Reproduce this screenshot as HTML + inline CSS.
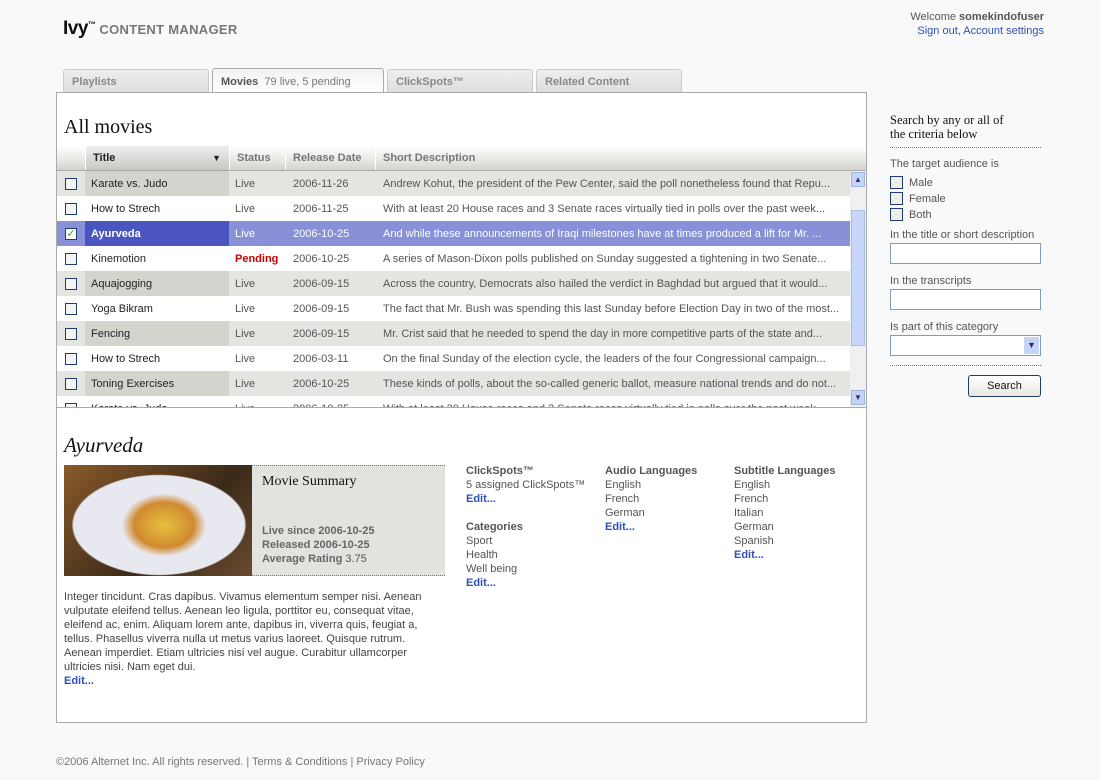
<!DOCTYPE html>
<html><head><meta charset="utf-8">
<style>
*{margin:0;padding:0;box-sizing:border-box}
body{width:1100px;height:780px;background:#f9f9f9;font-family:"Liberation Sans",Tahoma,sans-serif;font-size:11px;color:#555;position:relative;overflow:hidden}
.abs{position:absolute}
.logo{left:63px;top:18px;font-size:19px;font-weight:bold;color:#111;letter-spacing:-0.5px}
.logo sup{font-size:8px;vertical-align:7px}
.logo span{font-size:13px;color:#777;letter-spacing:0.3px;margin-left:4px}
.welcome{right:56px;top:10px;text-align:right;line-height:14px;color:#555}
.welcome a{color:#2f4fb8;text-decoration:none}
.tab{top:69px;height:24px;background:linear-gradient(#eee,#ddd);border:1px solid #ccc;border-bottom:none;border-radius:3px 3px 0 0;font-weight:bold;color:#888;padding:6px 8px}
.tab.on{background:linear-gradient(#f2f2f2,#fff);border-color:#aaa;color:#555;height:25px;top:68px;padding-top:7px}
.tab.on span{font-weight:normal;color:#777}
.panel{left:56px;top:92px;width:811px;height:631px;border:1px solid #aaa;background:#fff}
h1{font-family:"Liberation Serif",serif;font-weight:normal;font-size:20px;color:#111;position:absolute;left:7px;top:23px}
.hdr{position:absolute;left:0;top:53px;width:809px;height:25px;background:linear-gradient(#fff,#e6e6e3 60%,#d2d2ce);border-bottom:1px solid #aaa}
.hdr div{position:absolute;top:0;height:24px;line-height:25px;font-weight:bold;color:#777;padding-left:7px;border-left:1px solid #fff}
.rows{position:absolute;left:0;top:78px;width:793px;height:236px;overflow:hidden}
.row{height:25px;position:relative;line-height:27px;background:#fff}
.row div{position:absolute;top:0;height:25px;white-space:nowrap;overflow:hidden;text-overflow:ellipsis;padding-left:6px}
.row.g{background:#e4e4e0}
.row.g .t{background:#d4d4cf}
.row .t{left:28px;width:144px;color:#222}
.row .s{left:172px;width:56px}
.row .d{left:228px;width:90px;padding-left:8px}
.row .x{left:318px;width:472px;padding-left:8px}
.cb{position:absolute;left:8px;top:7px;width:12px;height:12px;border:1px solid #1c3f6e;background:#f4f4f2}
.row.sel{background:#8890d8;color:#fff}
.row.sel .t{background:#4a55c0;color:#fff;font-weight:bold}
.sb{position:absolute;left:793px;top:78px;width:16px;height:236px;background:#f0f0f0}
.sep{position:absolute;left:0;top:314px;width:809px;border-top:1px solid #aaa}
h2{font-family:"Liberation Serif",serif;font-style:italic;font-weight:normal;font-size:21px;color:#111;position:absolute;left:7px;top:340px}
.img{left:7px;top:372px;width:188px;height:111px;background:radial-gradient(ellipse 60px 45px at 100px 60px,#e8c040,#d08a30 50%,transparent 70%),radial-gradient(ellipse 95px 55px at 95px 60px,#e8e8f0 90%,transparent 92%),linear-gradient(135deg,#8a5a2a,#3a2a18 60%,#6a4a30)}
.sum{left:195px;top:372px;width:193px;height:111px;background:#e2e2de;border-top:1px dotted #777;border-bottom:1px dotted #777;padding:8px 10px}
.sum h3{font-family:"Liberation Serif",serif;font-weight:normal;font-size:14px;color:#111}
.sum p{position:absolute;left:10px;top:58px;line-height:14px}
b{color:#666}
.col{line-height:14px;top:371px}
.col b{color:#555}
.col a,.desc a{color:#2f4fb8;font-weight:bold;text-decoration:none}
.desc{left:7px;top:497px;width:370px;line-height:14px;color:#444}
.side{left:890px;top:113px;width:151px}
.side h4{font-family:"Liberation Serif",serif;font-weight:normal;font-size:12.5px;color:#111;line-height:14px;padding-bottom:6px;border-bottom:1px dotted #777}
.lbl{margin-top:11px}
.ck{position:relative;height:16px;line-height:16px;padding-left:19px}
.ck i{position:absolute;left:0;top:1px;width:13px;height:13px;border:1px solid #1c3f6e;background:#eeeeea}
.inp{width:151px;height:21px;border:1px solid #7f9db9;background:#fff;margin-top:2px}
.btn{position:absolute;right:0;width:73px;height:22px;border:1px solid #1c3f6e;border-radius:3px;background:linear-gradient(#fff,#e8e8e0);text-align:center;line-height:20px;color:#111}
.foot{left:56px;top:755px;color:#777}
</style></head><body>
<div class="abs logo">Ivy<sup>™</sup><span>CONTENT MANAGER</span></div>
<div class="abs welcome">Welcome <b style="color:#555">somekindofuser</b><br><a>Sign out, Account settings</a></div>
<div class="abs tab" style="left:63px;width:146px">Playlists</div>
<div class="abs tab on" style="left:212px;width:172px">Movies <span>&nbsp;79 live, 5 pending</span></div>
<div class="abs tab" style="left:387px;width:146px">ClickSpots™</div>
<div class="abs tab" style="left:536px;width:146px">Related Content</div>
<div class="abs panel">
<h1>All movies</h1>
<div class="hdr">
<div style="left:0;width:28px;border:none"></div>
<div style="left:28px;width:144px;color:#222;background:linear-gradient(#eee,#c8c8c4)">Title<span style="position:absolute;right:8px;font-size:9px">▼</span></div>
<div style="left:172px;width:56px">Status</div>
<div style="left:228px;width:90px">Release Date</div>
<div style="left:318px;width:491px">Short Description</div>
</div>
<div class="rows">
<div class="row g"><span class="cb"></span><div class="t">Karate vs. Judo</div><div class="s">Live</div><div class="d">2006-11-26</div><div class="x">Andrew Kohut, the president of the Pew Center, said the poll nonetheless found that Repu...</div></div>
<div class="row"><span class="cb"></span><div class="t">How to Strech</div><div class="s">Live</div><div class="d">2006-11-25</div><div class="x">With at least 20 House races and 3 Senate races virtually tied in polls over the past week...</div></div>
<div class="row sel"><span class="cb" style="background:#fff;color:#2a9a2a;font-size:11px;line-height:10px;text-align:center">✓</span><div class="t">Ayurveda</div><div class="s">Live</div><div class="d">2006-10-25</div><div class="x">And while these announcements of Iraqi milestones have at times produced a lift for Mr. ...</div></div>
<div class="row"><span class="cb"></span><div class="t">Kinemotion</div><div class="s" style="color:#c00;font-weight:bold">Pending</div><div class="d">2006-10-25</div><div class="x">A series of Mason-Dixon polls published on Sunday suggested a tightening in two Senate...</div></div>
<div class="row g"><span class="cb"></span><div class="t">Aquajogging</div><div class="s">Live</div><div class="d">2006-09-15</div><div class="x">Across the country, Democrats also hailed the verdict in Baghdad but argued that it would...</div></div>
<div class="row"><span class="cb"></span><div class="t">Yoga Bikram</div><div class="s">Live</div><div class="d">2006-09-15</div><div class="x">The fact that Mr. Bush was spending this last Sunday before Election Day in two of the most...</div></div>
<div class="row g"><span class="cb"></span><div class="t">Fencing</div><div class="s">Live</div><div class="d">2006-09-15</div><div class="x">Mr. Crist said that he needed to spend the day in more competitive parts of the state and...</div></div>
<div class="row"><span class="cb"></span><div class="t">How to Strech</div><div class="s">Live</div><div class="d">2006-03-11</div><div class="x">On the final Sunday of the election cycle, the leaders of the four Congressional campaign...</div></div>
<div class="row g"><span class="cb"></span><div class="t">Toning Exercises</div><div class="s">Live</div><div class="d">2006-10-25</div><div class="x">These kinds of polls, about the so-called generic ballot, measure national trends and do not...</div></div>
<div class="row"><span class="cb"></span><div class="t">Karate vs. Judo</div><div class="s">Live</div><div class="d">2006-10-25</div><div class="x">With at least 20 House races and 3 Senate races virtually tied in polls over the past week...</div></div>
</div>
<div class="sb">
<div style="position:absolute;left:1px;top:1px;width:14px;height:15px;background:#c4d4f8;border:1px solid #a0b4e0;font-size:8px;text-align:center;line-height:13px;color:#335">▲</div>
<div style="position:absolute;left:1px;top:39px;width:14px;height:136px;background:#c8d6fa;border:1px solid #a8bce8"></div>
<div style="position:absolute;left:1px;top:219px;width:14px;height:15px;background:#c4d4f8;border:1px solid #a0b4e0;font-size:8px;text-align:center;line-height:13px;color:#335">▼</div>
</div>
<div class="sep"></div>
<h2>Ayurveda</h2>
<div class="abs img"></div>
<div class="abs sum"><h3>Movie Summary</h3><p><b>Live since 2006-10-25</b><br><b>Released 2006-10-25</b><br><b>Average Rating</b> 3.75</p></div>
<div class="abs col" style="left:409px"><b>ClickSpots™</b><br>5 assigned ClickSpots™<br><a>Edit...</a><br><br><b>Categories</b><br>Sport<br>Health<br>Well being<br><a>Edit...</a></div>
<div class="abs col" style="left:548px"><b>Audio Languages</b><br>English<br>French<br>German<br><a>Edit...</a></div>
<div class="abs col" style="left:677px"><b>Subtitle Languages</b><br>English<br>French<br>Italian<br>German<br>Spanish<br><a>Edit...</a></div>
<div class="abs desc">Integer tincidunt. Cras dapibus. Vivamus elementum semper nisi. Aenean vulputate eleifend tellus. Aenean leo ligula, porttitor eu, consequat vitae, eleifend ac, enim. Aliquam lorem ante, dapibus in, viverra quis, feugiat a, tellus. Phasellus viverra nulla ut metus varius laoreet. Quisque rutrum. Aenean imperdiet. Etiam ultricies nisi vel augue. Curabitur ullamcorper ultricies nisi. Nam eget dui.<br><a>Edit...</a></div>
</div>
<div class="abs side">
<h4>Search by any or all of<br>the criteria below</h4>
<div class="lbl" style="margin-top:10px">The target audience is</div>
<div class="ck" style="margin-top:5px"><i></i>Male</div>
<div class="ck"><i></i>Female</div>
<div class="ck"><i></i>Both</div>
<div class="lbl" style="margin-top:6px">In the title or short description</div>
<div class="inp"></div>
<div class="lbl">In the transcripts</div>
<div class="inp"></div>
<div class="lbl">Is part of this category</div>
<div class="inp" style="position:relative"><span style="position:absolute;right:1px;top:1px;width:15px;height:17px;background:#c4d4f8;font-size:9px;text-align:center;line-height:17px;color:#335">▼</span></div>
<div style="border-top:1px dotted #777;margin-top:9px;position:relative"><div class="btn" style="top:9px">Search</div></div>
</div>
<div class="abs foot" style="top:756px">©2006 Alternet Inc. All rights reserved. | Terms &amp; Conditions | Privacy Policy</div>
</body></html>
